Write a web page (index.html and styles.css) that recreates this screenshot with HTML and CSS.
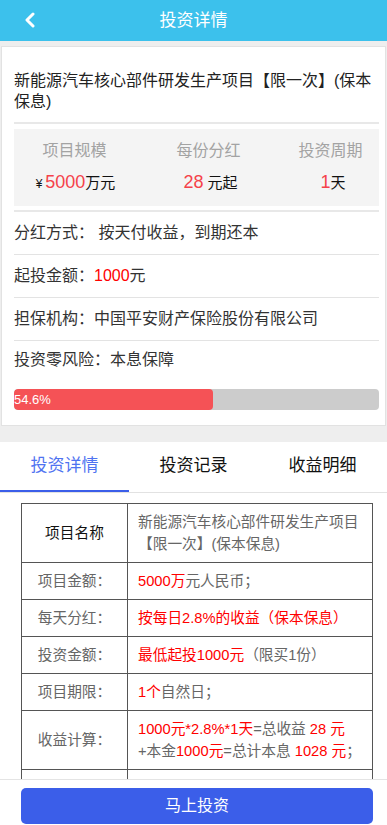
FILE: index.html
```html
<!DOCTYPE html>
<html lang="zh-CN">
<head>
<meta charset="utf-8">
<title>投资详情</title>
<link rel="stylesheet" href="styles.css">
</head>
<body>
<header class="topbar">
  <a class="back" href="#"><svg width="12" height="16" viewBox="0 0 12 16"><polyline points="9,2 3,8 9,14" fill="none" stroke="#fff" stroke-width="3" stroke-linecap="round" stroke-linejoin="round"/></svg></a>
  <h1 class="topbar-title">投资详情</h1>
</header>

<section class="card">
  <h2 class="proj-title">新能源汽车核心部件研发生产项目【限一次】(保本保息)</h2>
  <div class="stats">
    <div class="stat">
      <div class="stat-label">项目规模</div>
      <div class="stat-value"><span class="yen">¥</span><span class="num">5000</span>万元</div>
    </div>
    <div class="stat">
      <div class="stat-label">每份分红</div>
      <div class="stat-value"><span class="num">28</span> 元起</div>
    </div>
    <div class="stat">
      <div class="stat-label">投资周期</div>
      <div class="stat-value"><span class="num">1</span>天</div>
    </div>
  </div>
  <ul class="info">
    <li>分红方式： 按天付收益，到期还本</li>
    <li>起投金额：<span class="red">1000</span>元</li>
    <li>担保机构：中国平安财产保险股份有限公司</li>
    <li>投资零风险：本息保障</li>
  </ul>
  <div class="progress"><div class="progress-fill" style="width:54.6%">54.6%</div></div>
</section>

<section class="detail">
  <nav class="tabs">
    <a class="tab active" href="#">投资详情</a>
    <a class="tab" href="#">投资记录</a>
    <a class="tab" href="#">收益明细</a>
  </nav>
  <table class="dtable">
    <tr><th class="first">项目名称</th><td>新能源汽车核心部件研发生产项目【限一次】(保本保息)</td></tr>
    <tr><th>项目金额：</th><td><span class="red">5000万</span>元人民币；</td></tr>
    <tr><th>每天分红：</th><td><span class="red">按每日2.8%的收益（保本保息）</span></td></tr>
    <tr><th>投资金额：</th><td><span class="red">最低起投1000元</span>（限买1份）</td></tr>
    <tr><th>项目期限：</th><td><span class="red">1个</span>自然日；</td></tr>
    <tr><th>收益计算：</th><td><span class="red">1000元*2.8%*1天</span>=总收益<span class="red"> 28 元</span><br>+本金<span class="red">1000元</span>=总计本息<span class="red"> 1028 元</span>；</td></tr>
    <tr><th>担保机构：</th><td>中国平安财产保险股份有限公司</td></tr>
  </table>
</section>

<footer class="buybar">
  <a class="buy" href="#">马上投资</a>
</footer>
</body>
</html>
```

FILE: styles.css
```css
* { box-sizing: border-box; }
html, body { margin: 0; padding: 0; }
body {
  background: #eeeeee;
  font-family: "Liberation Sans", "Noto Sans CJK SC", sans-serif;
  color: #333;
  padding-bottom: 60px;
}
a { text-decoration: none; color: inherit; }

.topbar {
  height: 41px;
  background: #3cc1ec;
  display: flex;
  align-items: center;
  justify-content: center;
  position: relative;
}
.back {
  position: absolute;
  left: 24px;
  top: 12px;
  display: block;
  width: 12px;
  height: 16px;
}
.back svg { display: block; }
.topbar-title {
  margin: 0;
  font-size: 17px;
  font-weight: normal;
  color: #fff;
  line-height: 41px;
}

.card {
  background: #fff;
  margin: 5px 1px 0 1px;
  border: 1px solid #e2e2e2;
  padding: 0 6px 15px 12px;
}
.proj-title {
  margin: 0;
  padding: 23px 0 10px 0;
  font-size: 16px;
  font-weight: normal;
  line-height: 21px;
  color: #222;
  border-bottom: 2px solid #e8e8e8;
}
.stats {
  margin-top: 5px;
  background: #f4f4f4;
  display: grid;
  grid-template-columns: 121px 147px 1fr;
  padding: 10px 0 9px 0;
}
.stat { text-align: center; }
.stat-label {
  font-size: 16px;
  line-height: 24px;
  color: #a3a3a3;
}
.stat-value {
  margin-top: 6px;
  font-size: 15px;
  line-height: 26px;
  color: #111;
}
.stat:first-child .stat-value { padding-left: 2px; }
.stat:nth-child(2) .stat-value { padding-left: 4px; }
.stat:nth-child(3) .stat-value { padding-left: 5px; }
.yen { font-size: 12px; margin-right: 3px; }
.num { color: #f5424a; font-size: 18px; }
.info {
  list-style: none;
  margin: 4px 0 0 0;
  padding: 0;
  border-top: 2px solid #e8e8e8;
}
.info li {
  font-size: 16px;
  height: 43px;
  line-height: 42px;
  border-bottom: 1px solid #e3e3e3;
  color: #333;
}
.info li:last-child { border-bottom: 0; height: 40px; line-height: 38px; }
.red { color: #ff0000; }

.progress {
  margin-top: 8px;
  height: 21px;
  background: #cccccc;
  border-radius: 4px;
  overflow: hidden;
}
.progress-fill {
  height: 100%;
  background: #f55256;
  border-radius: 4px;
  color: #fff;
  font-size: 13px;
  line-height: 21px;
}

.detail {
  background: #fff;
  margin-top: 16px;
  padding-bottom: 20px;
}
.tabs {
  display: flex;
  border-bottom: 1px solid #e2e2e2;
}
.tab {
  flex: 1;
  text-align: center;
  height: 50px;
  line-height: 48px;
  font-size: 17px;
  color: #111;
}
.tab.active {
  color: #4f73f1;
  box-shadow: inset 0 -2px 0 #3b5ee9;
}
.dtable {
  margin: 10px 14px 0 21px;
  width: 352px;
  border-collapse: collapse;
  font-size: 14.7px;
  line-height: 22px;
}
.dtable th, .dtable td {
  border: 1px solid #555;
  padding: 7px 10px;
  text-align: left;
  vertical-align: middle;
}
.dtable th {
  width: 106px;
  font-weight: normal;
  color: #666;
  text-align: center;
  padding: 7px 4px;
}
.dtable th.first { color: #111; }
.dtable td { color: #666; padding-left: 10px; padding-right: 6px; }
.dtable tr:first-child th { padding-top: 8px; padding-bottom: 8px; }

.buybar {
  position: fixed;
  left: 0;
  right: 0;
  bottom: 0;
  height: 46px;
  background: #fff;
  border-top: 1px solid #e4e4e4;
  padding: 8px 14px 0 21px;
}
.buy {
  display: block;
  height: 36px;
  line-height: 36px;
  background: #3b5ee9;
  border-radius: 5px;
  color: #fff;
  font-size: 16px;
  text-align: center;
}
```
